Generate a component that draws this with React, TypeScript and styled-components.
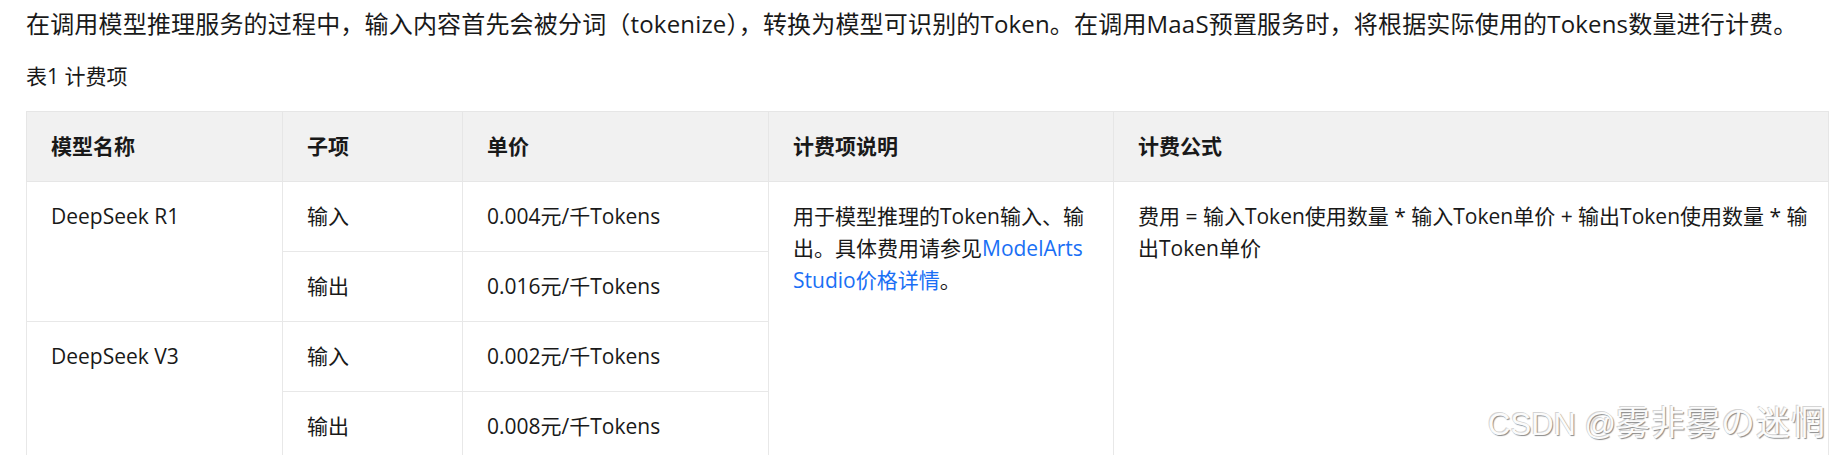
import React from "react";
import styled, { createGlobalStyle } from "styled-components";

const GlobalStyle = createGlobalStyle`
  html, body {
    margin: 0;
    padding: 0;
    background: #ffffff;
  }
  body {
    font-family: "Open Sans", "Noto Sans CJK SC", sans-serif;
    color: #191919;
  }
`;

const Page = styled.div`
  position: relative;
  padding: 6px 4px 0 26px;
`;

const Intro = styled.p`
  margin: 0;
  font-size: 24px;
  line-height: 36px;
  letter-spacing: 0.18px;
  white-space: nowrap;
`;

const Caption = styled.div`
  margin-top: 18px;
  font-size: 21px;
  line-height: 32px;
`;

const Table = styled.table`
  margin-top: 19px;
  width: 1802px;
  border-collapse: collapse;
  table-layout: fixed;
  font-size: 21px;
  line-height: 32px;
`;

const HeadCell = styled.th`
  background: #f1f1f1;
  border: 1px solid #e6e6e6;
  padding: 18px 18px 19px 24px;
  text-align: left;
  font-weight: 700;
  vertical-align: middle;
`;

const Cell = styled.td`
  border: 1px solid #e8e8e8;
  padding: 18px 16px 19px 24px;
  text-align: left;
  vertical-align: top;
  font-weight: 400;
`;

const Link = styled.a`
  color: #1a6ff5;
  text-decoration: none;
`;

const Watermark = styled.div`
  position: absolute;
  right: 6px;
  top: 404px;
  font-family: "Liberation Sans", "Noto Sans CJK JP", sans-serif;
  font-size: 31px;
  line-height: 38px;
  color: #fbfbfb;
  text-shadow: 1px 1px 1px #8a8a8a, -1px -1px 0 #d4d4d4;
  white-space: nowrap;
  pointer-events: none;
`;

const WatermarkName = styled.span`
  font-size: 34px;
  letter-spacing: 1px;
`;

const widths = [256, 180, 306, 345, 715];

const rows = [
  { model: "DeepSeek R1", items: [["输入", "0.004元/千Tokens"], ["输出", "0.016元/千Tokens"]] },
  { model: "DeepSeek V3", items: [["输入", "0.002元/千Tokens"], ["输出", "0.008元/千Tokens"]] },
];

export default function App() {
  return (
    <>
      <GlobalStyle />
      <Page>
        <Intro>
          在调用模型推理服务的过程中，输入内容首先会被分词（tokenize），转换为模型可识别的Token。在调用MaaS预置服务时，将根据实际使用的Tokens数量进行计费。
        </Intro>
        <Caption>表1 计费项</Caption>
        <Table>
          <colgroup>
            {widths.map((w, i) => (
              <col key={i} style={{ width: `${w}px` }} />
            ))}
          </colgroup>
          <thead>
            <tr>
              <HeadCell>模型名称</HeadCell>
              <HeadCell>子项</HeadCell>
              <HeadCell>单价</HeadCell>
              <HeadCell>计费项说明</HeadCell>
              <HeadCell>计费公式</HeadCell>
            </tr>
          </thead>
          <tbody>
            {rows.map((r, ri) =>
              r.items.map((it, ii) => (
                <tr key={`${ri}-${ii}`}>
                  {ii === 0 && <Cell rowSpan={2}>{r.model}</Cell>}
                  <Cell>{it[0]}</Cell>
                  <Cell>{it[1]}</Cell>
                  {ri === 0 && ii === 0 && (
                    <>
                      <Cell rowSpan={4}>
                        用于模型推理的Token输入、输出。具体费用请参见
                        <Link href="#">ModelArts Studio价格详情</Link>。
                      </Cell>
                      <Cell rowSpan={4}>
                        费用 = 输入Token使用数量 * 输入Token单价 + 输出Token使用数量 * 输出Token单价
                      </Cell>
                    </>
                  )}
                </tr>
              ))
            )}
          </tbody>
        </Table>
        <Watermark>
          CSDN @<WatermarkName>雾非雾の迷惘</WatermarkName>
        </Watermark>
      </Page>
    </>
  );
}
